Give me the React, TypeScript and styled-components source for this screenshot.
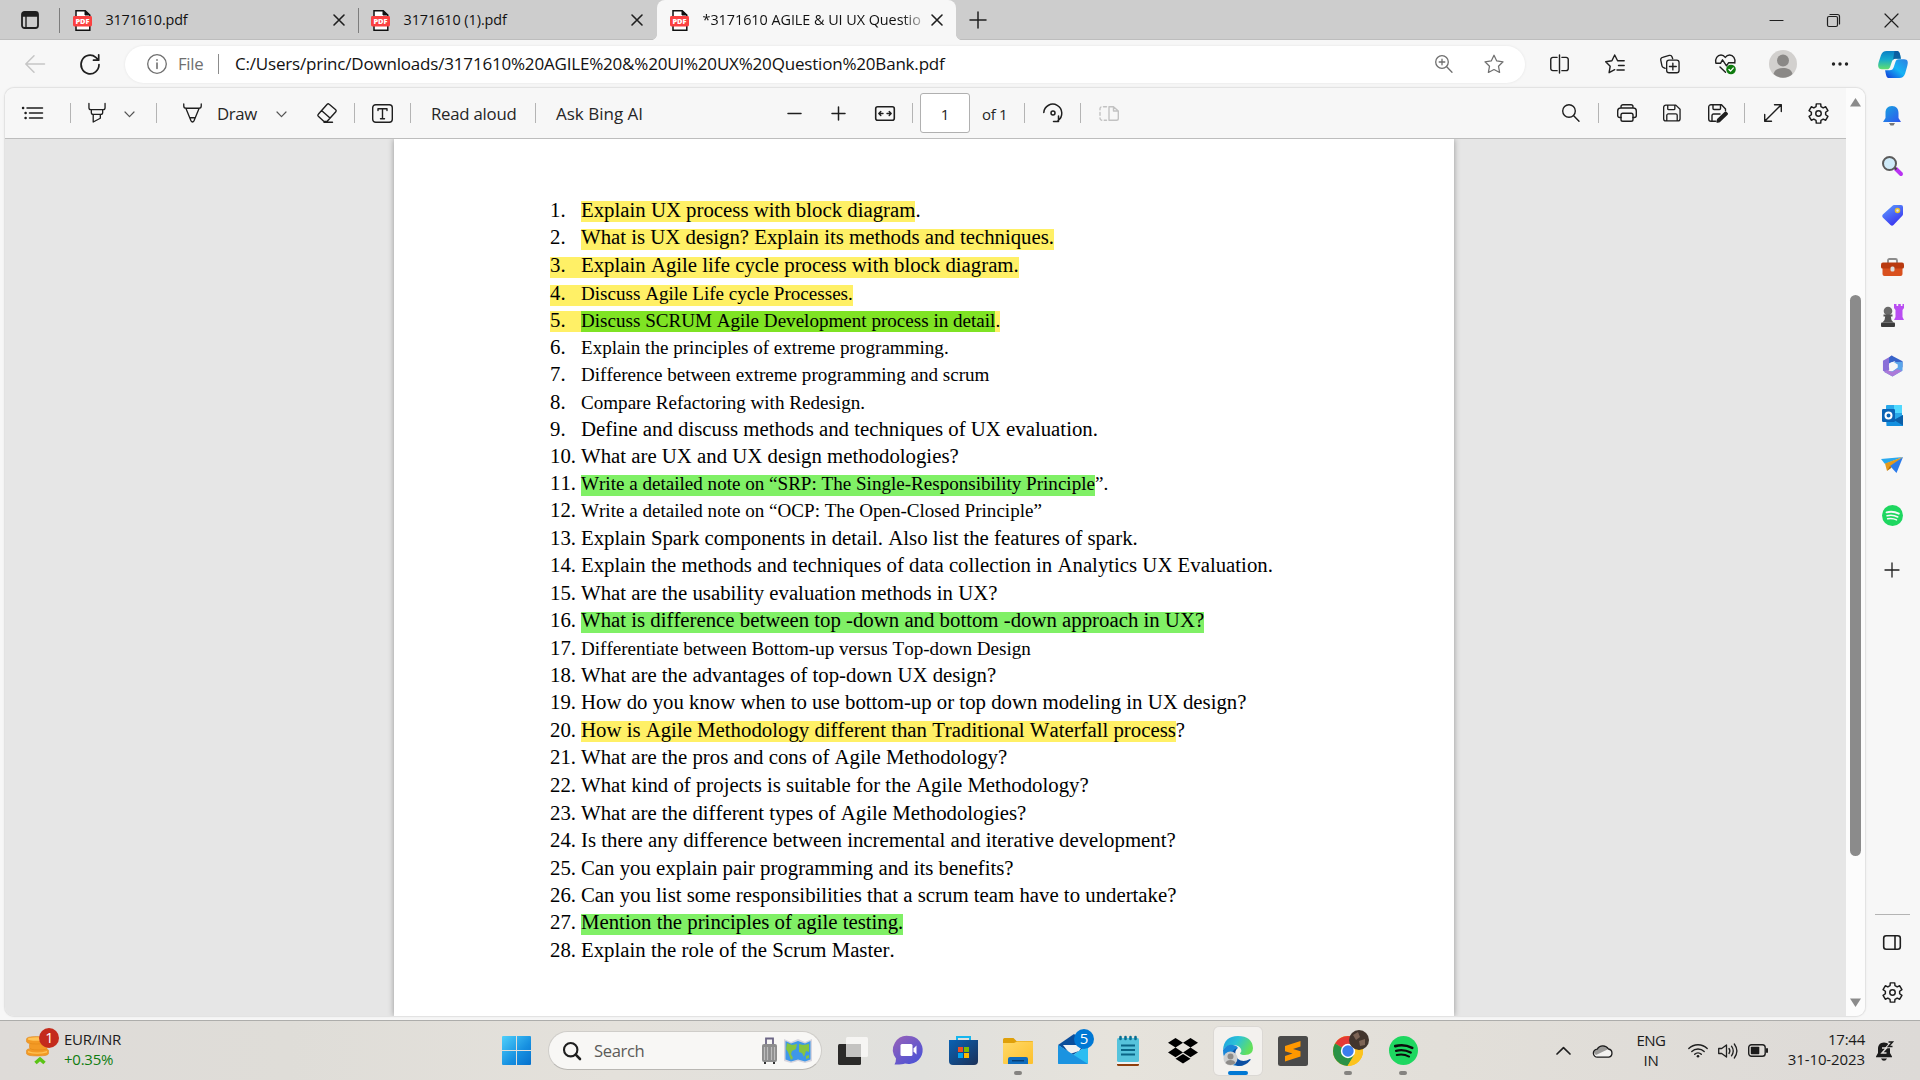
import React from "react";
import styled, { createGlobalStyle, css } from "styled-components";

const Global = createGlobalStyle`
  * { box-sizing: border-box; }
  html, body { margin: 0; padding: 0; }
  body { width: 1920px; height: 1080px; overflow: hidden; background: #f7f7f7; font-family: "Open Sans", "Noto Sans", sans-serif; color: #1b1b1b; }
  svg { display: block; flex: none; }
`;

const Screen = styled.div`
  width: 1920px;
  height: 1080px;
  display: flex;
  flex-direction: column;
  background: #f7f7f7;
`;

/* ---------- shared pieces ---------- */

const Glyph = styled.svg<{ $ml?: number; $c?: string; $sw?: number; $mt?: number }>`
  margin-left: ${(p) => p.$ml ?? 0}px;
  margin-top: ${(p) => p.$mt ?? 0}px;
  color: ${(p) => p.$c ?? "#1f1f1f"};
  fill: none;
  stroke: currentColor;
  stroke-width: ${(p) => p.$sw ?? 1.4};
  stroke-linecap: round;
  stroke-linejoin: round;
  overflow: visible;
`;

const Art = styled.svg<{ $ml?: number; $mt?: number }>`
  margin-left: ${(p) => p.$ml ?? 0}px;
  margin-top: ${(p) => p.$mt ?? 0}px;
  overflow: visible;
`;

const Label = styled.span<{ $w: number; $ml?: number; $size: number; $ls?: number; $c?: string }>`
  width: ${(p) => p.$w}px;
  flex: none;
  margin-left: ${(p) => p.$ml ?? 0}px;
  font-size: ${(p) => p.$size}px;
  letter-spacing: ${(p) => p.$ls ?? 0}px;
  color: ${(p) => p.$c ?? "#262626"};
  line-height: 20px;
  white-space: nowrap;
`;

const Rule = styled.i<{ $ml?: number; $mr?: number; $h?: number; $c?: string }>`
  flex: none;
  width: 1px;
  height: ${(p) => p.$h ?? 20}px;
  margin-left: ${(p) => p.$ml ?? 0}px;
  margin-right: ${(p) => p.$mr ?? 0}px;
  background: ${(p) => p.$c ?? "#b4b4b4"};
`;

const gearPath = (() => {
  const pts: string[] = [];
  for (let i = 0; i < 6; i++) {
    const base = i * 60 - 90;
    [
      [-20, 6.9],
      [-13, 9.4],
      [13, 9.4],
      [20, 6.9],
    ].forEach(([d, r]) => {
      const a = ((base + d) * Math.PI) / 180;
      pts.push(`${(10 + r * Math.cos(a)).toFixed(2)} ${(10 + r * Math.sin(a)).toFixed(2)}`);
    });
  }
  return `M${pts.join("L")}Z`;
})();

const Gear = ({ ml = 0 }: { ml?: number }) => (
  <Glyph $ml={ml} width="21" height="21" viewBox="0 0 20 20">
    <path d={gearPath} />
    <circle cx="10" cy="10" r="2.6" />
  </Glyph>
);

/* ---------- tab strip ---------- */

const TabStrip = styled.header`
  height: 40px;
  flex: none;
  display: flex;
  align-items: center;
  background: #cdcdcd;
  box-shadow: inset 0 -1px 0 #bdbdbd;
`;

const TabBox = styled.div<{ $active?: boolean }>`
  position: relative;
  width: ${(p) => (p.$active ? 299 : 298)}px;
  height: 40px;
  flex: none;
  display: flex;
  align-items: center;
  padding: 0 14px 0 13px;
  ${(p) =>
    p.$active &&
    css`
      margin-left: 1px;
      background: #f7f7f7;
      border-radius: 8px 8px 0 0;
      &::before,
      &::after {
        content: "";
        position: absolute;
        bottom: 0;
        width: 5px;
        height: 5px;
      }
      &::before {
        left: -5px;
        background: radial-gradient(circle at 0 0, transparent 4.5px, #f7f7f7 5px);
      }
      &::after {
        right: -5px;
        background: radial-gradient(circle at 100% 0, transparent 4.5px, #f7f7f7 5px);
      }
    `}
`;

const TabTitle = styled.span<{ $ls: number; $fade?: boolean }>`
  flex: 1;
  min-width: 0;
  margin: 0 ${(p) => (p.$fade ? 8 : 14)}px 0 13.5px;
  white-space: nowrap;
  font-size: 14.4px;
  letter-spacing: ${(p) => p.$ls}px;
  line-height: 20px;
  color: #111;
  ${(p) => p.$fade && css`mask-image: linear-gradient(90deg, #000 90%, rgba(0, 0, 0, 0.2) 100%);`}
`;

const PdfIcon = () => (
  <Art width="19" height="21" viewBox="0 0 19 21">
    <path d="M4 .8h8.2L16.8 5v15.2H3V.8z" fill="#fff" stroke="#111" strokeWidth="1.5" />
    <path d="M12 .8V5h4.8z" fill="#111" stroke="#111" />
    <rect x="0" y="6" width="19" height="10.5" rx="1.4" fill="#fb4141" />
    <text x="9.5" y="14.1" textAnchor="middle" fontFamily="Open Sans, sans-serif" fontWeight="800" fontSize="7.4" fill="#fff">
      PDF
    </text>
  </Art>
);

const Cross = ({ ml = 0, size = 10, sw = 1.6 }: { ml?: number; size?: number; sw?: number }) => (
  <Glyph $ml={ml} $sw={sw} width={size} height={size} viewBox={`0 0 ${size} ${size}`}>
    <path d={`M0 0L${size} ${size}M${size} 0L0 ${size}`} />
  </Glyph>
);

const Tab = ({ title, ls, active }: { title: string; ls: number; active?: boolean }) => (
  <TabBox $active={active}>
    <PdfIcon />
    <TabTitle $ls={ls} $fade={active}>
      {title}
    </TabTitle>
    <Cross />
  </TabBox>
);

const Tabs = () => (
  <TabStrip>
    <Glyph $ml={21} $sw={1.8} width="18" height="18" viewBox="0 0 18 18">
      <rect x="1" y="1" width="16" height="16" rx="2.5" />
      <path d="M1 3.5h16" strokeWidth="4.5" strokeLinecap="butt" />
      <path d="M5 5v12" strokeWidth="1.4" />
    </Glyph>
    <Rule $ml={20} $h={25} $c="#7d7d7d" />
    <Tab title="3171610.pdf" ls={-0.17} />
    <Rule $h={25} $c="#7d7d7d" $mr={-1} />
    <Tab title="3171610 (1).pdf" ls={-0.06} />
    <Tab title="*3171610 AGILE & UI UX Questio" ls={-0.04} active />
    <Glyph $ml={14} $sw={1.5} width="16" height="16" viewBox="0 0 16 16">
      <path d="M8 0v16M0 8h16" />
    </Glyph>
    <Glyph $ml={784} $sw={1.2} width="13" height="13" viewBox="0 0 13 13">
      <path d="M0 6.5h13" />
    </Glyph>
    <Glyph $ml={44} $sw={1.2} width="13" height="13" viewBox="0 0 13 13">
      <rect x="0.5" y="2.5" width="10" height="10" rx="1.5" />
      <path d="M3 .5h7.5a2 2 0 0 1 2 2V10" />
    </Glyph>
    <Cross ml={45} size={13} sw={1.2} />
  </TabStrip>
);

/* ---------- address row ---------- */

const AddressRow = styled.div`
  height: 48px;
  flex: none;
  display: flex;
  align-items: center;
`;

const AddressPill = styled.div`
  width: 1400px;
  height: 37px;
  margin-left: 25px;
  flex: none;
  display: flex;
  align-items: center;
  background: #fff;
  border-radius: 19px;
  box-shadow: 0 0 3px rgba(0, 0, 0, 0.08);
`;

const Avatar = () => (
  <Art $ml={33} width="28" height="28" viewBox="0 0 28 28">
    <circle cx="14" cy="14" r="14" fill="#d2d0ce" />
    <circle cx="14" cy="10.5" r="6" fill="#8a8886" />
    <path d="M4.5 24c1-4.500 5-6 9.500-6s8.500 1.500 9.500 6a14 14 0 0 1-19 0z" fill="#8a8886" />
  </Art>
);

const Copilot = () => (
  <Art $ml={29} width="30" height="27" viewBox="0 0 31 28">
    <defs>
      <linearGradient id="cpA" x1="0" y1="0" x2="0" y2="1">
        <stop offset="0" stopColor="#0a7fc4" />
        <stop offset=".45" stopColor="#15a9cf" />
        <stop offset="1" stopColor="#63e06c" />
      </linearGradient>
      <linearGradient id="cpB" x1="1" y1="0" x2="0" y2="1">
        <stop offset="0" stopColor="#2f7fe0" />
        <stop offset=".5" stopColor="#16b4f5" />
        <stop offset="1" stopColor="#1238d8" />
      </linearGradient>
    </defs>
    <path d="M9 0h10.500c2.500 0 3 2.500 3.500 4.500l.7 3.500H18c-2 0-3.200 1.500-3.800 3.500l-1.700 5c-.6 1.600-1.700 2.500-3.200 2.500H4C0 19-.5 15.500.7 11.500L3 4.500C4 1.600 6 0 9 0z" fill="url(#cpA)" />
    <path d="M17 0h2.500c2.500 0 3 2.500 3.500 4.500l.7 3.500H18c-1 0-1.800.4-2.400 1z" fill="#0b4f94" opacity=".75" />
    <path d="M22 28H11.500C9 28 8.500 25.500 8 23.500L7.300 20H12c2.500 0 3.700-1.500 4.300-3.500l1.900-5.500c.6-1.800 1.700-2.500 3.200-2.500H27c4 0 4.500 3 3.300 7L28 23.500C27 26.400 25 28 22 28z" fill="url(#cpB)" />
  </Art>
);

const Address = () => (
  <AddressRow>
    <Glyph $ml={25} $c="#c6c6c6" $sw={1.5} width="20" height="18" viewBox="0 0 20 18">
      <path d="M19.500 9H1M9 .8L.8 9 9 17.200" />
    </Glyph>
    <Glyph $ml={35} $sw={1.7} width="20" height="21" viewBox="0 0 20 21">
      <path d="M19 10.500a9 9.300 0 1 1-3.200-7.100L18.500 6M18.700.8V6.200H13.500" />
    </Glyph>
    <AddressPill>
      <Glyph $ml={22} $c="#6f6f6f" $sw={1.3} width="20" height="20" viewBox="0 0 20 20">
        <circle cx="10" cy="10" r="9.300" />
        <path d="M10 9v5.500M10 5.800v.4" strokeWidth="1.600" />
      </Glyph>
      <Label $ml={11} $w={40} $size={16.8} $ls={-0.3} $c="#6f6f6f">
        File
      </Label>
      <Rule $c="#8c8c8c" />
      <Label $ml={16} $w={1200} $size={17} $ls={-0.19} $c="#111">
        C:/Users/princ/Downloads/3171610%20AGILE%20&%20UI%20UX%20Question%20Bank.pdf
      </Label>
      <Glyph $c="#6f6f6f" $sw={1.3} width="18" height="18" viewBox="0 0 18 18">
        <circle cx="7" cy="7" r="6.300" />
        <path d="M11.700 11.700L17 17.300M7 4.200v5.600M4.200 7h5.600" />
      </Glyph>
      <Glyph $ml={31} $c="#6f6f6f" $sw={1.3} width="20" height="20" viewBox="0 0 21 20">
        <path d="M10.500 .8l2.900 6 6.600.9-4.800 4.600 1.200 6.600-5.900-3.100-5.900 3.100 1.200-6.600L1 7.700l6.600-.9z" />
      </Glyph>
    </AddressPill>
    <Glyph $ml={25} width="19" height="20" viewBox="0 0 20 20" $sw={1.5}>
      <path d="M7.500 3H3a2.200 2.200 0 0 0-2.200 2.200v9.600A2.200 2.200 0 0 0 3 17h4.500M12.500 3H17a2.200 2.200 0 0 1 2.200 2.200v9.600A2.200 2.200 0 0 1 17 17h-4.500M10 .5v19" />
    </Glyph>
    <Glyph $ml={36} width="20" height="20" viewBox="0 0 20 20" $sw={1.4}>
      <path d="M12.600 6.800L9.700 1 6.900 6.800.7 7.700l4.500 4.500L4.100 18.700l5.600-3M12.600 6.800h6.600M13.500 11.500h5.700M12 16h7.200" />
    </Glyph>
    <Glyph $ml={35} width="20" height="20" viewBox="0 0 21 20" $sw={1.4}>
      <path d="M5.500 14.500L3.300 13.600a2.500 2.500 0 0 1-1.300-1.800L.8 6a2.500 2.500 0 0 1 1.900-3l7-2a2.500 2.500 0 0 1 3 1.600l.6 1.900" />
      <rect x="7" y="6" width="13" height="13.200" rx="2.500" />
      <path d="M13.500 9v7.200M9.900 12.600h7.200" />
    </Glyph>
    <Glyph $ml={35} width="21" height="20" viewBox="0 0 21 20" $sw={1.4}>
      <path d="M.8 9C-.2 4.500 2.500 1 6 1c2 0 3.300 1 4.300 2.400C11.300 2 12.600 1 14.600 1 18.100 1 20.800 4.500 19.800 9M1.200 9.300h4.300l2-3.500 4 6 2-3h6.100M5 13l5.500 5.200" />
      <circle cx="16" cy="15.500" r="4.800" fill="#0f7b0f" stroke="none" />
      <path d="M14 15.600l1.500 1.500 2.700-3" stroke="#fff" />
    </Glyph>
    <Avatar />
    <Glyph $ml={34} width="18" height="4" viewBox="0 0 18 4">
      <g fill="#222" stroke="none">
        <circle cx="2.500" cy="2" r="1.700" />
        <circle cx="9" cy="2" r="1.700" />
        <circle cx="15.500" cy="2" r="1.700" />
      </g>
    </Glyph>
    <Copilot />
  </AddressRow>
);

/* ---------- PDF viewer ---------- */

const Body = styled.div`
  display: flex;
  height: 928px;
  flex: none;
`;

const Viewer = styled.main`
  width: 1860px;
  height: 928px;
  margin-left: 5px;
  flex: none;
  display: flex;
  border-radius: 9px;
  overflow: hidden;
  box-shadow: 0 0 0 1px #e3e3e3, 0 0 3px rgba(0, 0, 0, 0.12);
`;

const ViewerMain = styled.div`
  width: 1841px;
  display: flex;
  flex-direction: column;
`;

const PdfBar = styled.div`
  position: relative;
  z-index: 1;
  height: 51px;
  flex: none;
  display: flex;
  align-items: center;
  background: #f7f7f7;
  border-bottom: 1px solid #bdbdbd;

  ${Label} {
    margin-top: 2px;
  }
`;

const PageInput = styled.div`
  width: 50px;
  height: 40px;
  margin-left: 7px;
  padding-top: 1px;
  flex: none;
  display: flex;
  align-items: center;
  justify-content: center;
  background: #fff;
  border: 1px solid #b0b0b0;
  border-radius: 3px;
  font-size: 15px;
`;

const Chevron = ({ ml }: { ml: number }) => (
  <Glyph $ml={ml} $mt={3} $c="#555" $sw={1.2} width="9" height="5" viewBox="0 0 9 5">
    <path d="M0 0l4.500 4.700L9 0" />
  </Glyph>
);

const Toolbar = () => (
  <PdfBar>
    <Glyph $ml={17} $sw={1.5} width="21" height="14" viewBox="0 0 21 14">
      <path d="M5 2h15.500M7.500 7h13M7.500 12h13" />
      <path d="M1 2h.2M3.500 7h.2M3.500 12h.2" strokeWidth="2.400" />
    </Glyph>
    <Rule $ml={27} />
    <Glyph $ml={17} width="18" height="20" viewBox="0 0 19 20">
      <path d="M1 0v4.500a2 2 0 0 0 2 2h13a2 2 0 0 0 2-2V0M3.500 6.500v3a2 2 0 0 0 2 2h8a2 2 0 0 0 2-2v-3M5.500 11.500v8L13 15.500v-4" />
    </Glyph>
    <Chevron ml={19} />
    <Rule $ml={22} />
    <Glyph $ml={26} width="19" height="20" viewBox="0 0 20 20">
      <path d="M.8.500v2A2.500 2.500 0 0 0 3.300 5h13.400a2.500 2.500 0 0 0 2.500-2.500v-2M3 5l5.300 13q1.700 3 3.400 0L17 5M8 15h4" />
    </Glyph>
    <Label $ml={15} $w={50} $size={16.8} $ls={-0.4}>
      Draw
    </Label>
    <Chevron ml={10} />
    <Glyph $ml={31} width="20" height="20" viewBox="0 0 20 20">
      <path d="M12.200 1.200l6.500 5.500q1 1 .1 2L10 18.500H7L1.300 13.300q-1-1 0-2L10.200 1.200q1-.9 2 0zM4.800 7.800l8.200 7.200M7 19.300h8.500" />
    </Glyph>
    <Rule $ml={17} />
    <Glyph $ml={17} width="21" height="19" viewBox="0 0 21 19">
      <rect x=".7" y=".7" width="19.600" height="17.600" rx="3" />
      <path d="M6 6.500V4.700h9v1.800M10.500 4.700v10M8.500 14.700h4" />
    </Glyph>
    <Rule $ml={17} />
    <Label $ml={20} $w={95} $size={16.8} $ls={-0.25}>
      Read aloud
    </Label>
    <Rule $ml={9} />
    <Label $ml={20} $w={100} $size={17} $ls={0}>
      Ask Bing AI
    </Label>
    <Glyph $ml={132} $sw={1.5} width="13" height="13" viewBox="0 0 13 13">
      <path d="M0 6.500h13" />
    </Glyph>
    <Glyph $ml={31} $sw={1.5} width="13" height="13" viewBox="0 0 13 13">
      <path d="M0 6.500h13M6.500 0v13" />
    </Glyph>
    <Glyph $ml={30} $sw={1.6} width="20" height="15" viewBox="0 0 20 15">
      <rect x=".7" y=".7" width="18.600" height="13.600" rx="2" />
      <path d="M8 7.500H4M5.800 5.500l-2 2 2 2M12 7.500h4M14.200 5.500l2 2-2 2" strokeWidth="1.400" />
    </Glyph>
    <Rule $ml={17} />
    <PageInput>1</PageInput>
    <Label $ml={12} $w={30} $size={15} $ls={-0.3}>
      of 1
    </Label>
    <Rule $ml={12} />
    <Glyph $ml={18} width="20" height="20" viewBox="0 0 20 20" $sw={1.5}>
      <path d="M.8 9.500A9 9 0 1 1 15 17.500M15.500 13v5.500H10.500" />
      <circle cx="10" cy="10" r="2" />
    </Glyph>
    <Rule $ml={17} />
    <Glyph $ml={18} $c="#c2c2c2" width="20" height="15" viewBox="0 0 20 15">
      <path d="M10 .7h4.500L19.300 5v7.500a1.800 1.800 0 0 1-1.800 1.800H10zM14.500 .7V5h4.800" />
      <path d="M7.500 .7H3A2 2 0 0 0 1 2.700v9.600a2 2 0 0 0 2 2h4.500" strokeDasharray="3 2.500" />
    </Glyph>
    <Glyph $ml={443} width="18" height="18" viewBox="0 0 18 18">
      <circle cx="7" cy="7" r="6.300" />
      <path d="M11.700 11.700L17 17.300" />
    </Glyph>
    <Rule $ml={18} />
    <Glyph $ml={18} width="20" height="18" viewBox="0 0 20 18">
      <path d="M4 13.500H2.700a2 2 0 0 1-2-2V7a3 3 0 0 1 3-3h12.600a3 3 0 0 1 3 3v4.500a2 2 0 0 1-2 2H16M4 4V2.700a2 2 0 0 1 2-2h8a2 2 0 0 1 2 2V4" />
      <rect x="4" y="9.300" width="12" height="8" rx="1.800" />
    </Glyph>
    <Glyph $ml={26} width="18" height="18" viewBox="0 0 19 18">
      <path d="M3 .7h10.500L18 5v10a2.300 2.300 0 0 1-2.300 2.300H3A2.300 2.300 0 0 1 .7 15V3A2.300 2.300 0 0 1 3 .7zM5 .9V4.500a1 1 0 0 0 1 1h5.500a1 1 0 0 0 1-1V.9M4 17v-5.500a1.500 1.500 0 0 1 1.500-1.500h8A1.500 1.500 0 0 1 15 11.500V17" />
    </Glyph>
    <Glyph $ml={27} width="20" height="18" viewBox="0 0 20 18">
      <path d="M7.500 17.300H3A2.300 2.300 0 0 1 .7 15V3A2.300 2.300 0 0 1 3 .7h10.500L17.500 5v1.500M5 .9V4.500a1 1 0 0 0 1 1h5.500a1 1 0 0 0 1-1V.9M4 17v-5.500a1.500 1.500 0 0 1 1.500-1.500H12" />
      <path d="M17.600 8.600l1.200 1.200-7.300 7.200-2 .6.700-2z" strokeWidth="2.400" fill="currentColor" />
    </Glyph>
    <Rule $ml={16} />
    <Glyph $ml={19} width="18" height="18" viewBox="0 0 18 18">
      <path d="M.7 17.300L17.300.7M10.500.7h6.800v6.800M.7 10.500v6.800h6.800" />
    </Glyph>
    <Gear ml={26} />
  </PdfBar>
);

const Canvas = styled.div`
  flex: 1;
  padding-left: 389px;
  background: #e6e6e6;
`;

const Sheet = styled.article`
  width: 1060px;
  height: 877px;
  padding: 59px 0 0 156px;
  background: #fff;
  box-shadow: 0 0 6px rgba(0, 0, 0, 0.35);
  font-family: "Liberation Serif", "Times New Roman", serif;
  font-kerning: none;
  font-variant-ligatures: none;
  color: #000;
`;

const Row = styled.div<{ $h: number }>`
  height: ${(p) => p.$h}px;
  display: flex;
  align-items: flex-start;
  white-space: pre;
`;

const highlightBox = css<{ $lift?: boolean; $small?: boolean; $mark?: string }>`
  height: 21px;
  margin-top: ${(p) => (p.$lift ? 3 : 4)}px;
  line-height: ${(p) => (p.$lift ? 17 : 15) + (p.$small ? 3 : 0)}px;
  font-size: ${(p) => (p.$small ? 19.08 : 20.8)}px;
  background: ${(p) => p.$mark ?? "none"};
`;

const Num = styled.span<{ $mark?: string; $lift?: boolean }>`
  width: 31px;
  flex: none;
  ${highlightBox}
`;

const Sentence = styled.span<{ $small?: boolean; $mark?: string; $lift?: boolean }>`
  ${highlightBox}
`;

const Y = "#fff066";
const G = "#80f066";
const GY = "#7fe324";

type Question = {
  t: string;
  base: number;
  small?: boolean;
  lift?: boolean;
  mark?: string;
  tail?: string;
  tailMark?: string;
  numMark?: string;
};

const questions: Question[] = [
  { t: "Explain UX process with block diagram", tail: ".", base: 217, mark: Y, lift: true },
  { t: "What is UX design? Explain its methods and techniques.", base: 244, mark: Y },
  { t: "Explain Agile life cycle process with block diagram.", base: 272, mark: Y, numMark: Y },
  { t: "Discuss Agile Life cycle Processes.", base: 300, small: true, mark: Y, numMark: Y },
  { t: "Discuss SCRUM Agile Development process in detail", tail: ".", base: 327, small: true, mark: GY, tailMark: Y, numMark: Y, lift: true },
  { t: "Explain the principles of extreme programming.", base: 354, small: true },
  { t: "Difference between extreme programming and scrum", base: 381, small: true },
  { t: "Compare Refactoring with Redesign.", base: 409, small: true },
  { t: "Define and discuss methods and techniques of UX evaluation.", base: 436 },
  { t: "What are UX and UX design methodologies?", base: 463 },
  { t: "Write a detailed note on “SRP: The Single-Responsibility Principle", tail: "”.", base: 490, small: true, mark: G },
  { t: "Write a detailed note on “OCP: The Open-Closed Principle”", base: 517, small: true },
  { t: "Explain Spark components in detail. Also list the features of spark.", base: 545 },
  { t: "Explain the methods and techniques of data collection in Analytics UX Evaluation.", base: 572 },
  { t: "What are the usability evaluation methods in UX?", base: 600 },
  { t: "What is difference between top -down and bottom -down approach in UX?", base: 627, mark: G },
  { t: "Differentiate between Bottom-up versus Top-down Design", base: 655, small: true },
  { t: "What are the advantages of top-down UX design?", base: 682 },
  { t: "How do you know when to use bottom-up or top down modeling in UX design?", base: 709 },
  { t: "How is Agile Methodology different than Traditional Waterfall process", tail: "?", base: 737, mark: Y, lift: true },
  { t: "What are the pros and cons of Agile Methodology?", base: 764 },
  { t: "What kind of projects is suitable for the Agile Methodology?", base: 792 },
  { t: "What are the different types of Agile Methodologies?", base: 820 },
  { t: "Is there any difference between incremental and iterative development?", base: 847 },
  { t: "Can you explain pair programming and its benefits?", base: 875 },
  { t: "Can you list some responsibilities that a scrum team have to undertake?", base: 902 },
  { t: "Mention the principles of agile testing.", base: 929, mark: G },
  { t: "Explain the role of the Scrum Master.", base: 957 },
];

const Document = () => (
  <Sheet>
    {questions.map((q, i) => (
      <Row key={q.t} $h={(questions[i + 1]?.base ?? q.base + 27) - q.base}>
        <Num $mark={q.numMark} $lift={q.lift}>
          {i + 1}.
        </Num>
        <Sentence $small={q.small} $mark={q.mark} $lift={q.lift}>
          {q.t}
        </Sentence>
        {q.tail && (
          <Sentence $small={q.small} $mark={q.tailMark} $lift={q.lift}>
            {q.tail}
          </Sentence>
        )}
      </Row>
    ))}
  </Sheet>
);

const ScrollTrack = styled.div`
  width: 19px;
  display: flex;
  flex-direction: column;
  align-items: center;
  justify-content: space-between;
  padding: 10px 0 9px;
  background: #fcfcfc;
`;

const ScrollThumb = styled.div`
  width: 11px;
  height: 561px;
  margin: 187px 0 141px;
  border-radius: 6px;
  background: #8b8b8b;
`;

const Scrollbar = () => (
  <ScrollTrack>
    <Art width="11" height="9" viewBox="0 0 11 9">
      <path d="M5.500 0L11 8.500H0z" fill="#8b8b8b" />
    </Art>
    <ScrollThumb />
    <Art width="11" height="9" viewBox="0 0 11 9">
      <path d="M5.500 9L11 .5H0z" fill="#8b8b8b" />
    </Art>
  </ScrollTrack>
);

/* ---------- Edge sidebar ---------- */

const Side = styled.aside`
  width: 54px;
  display: flex;
  flex-direction: column;
  align-items: center;
`;

const SideSlot = styled.div<{ $h?: number }>`
  width: 54px;
  height: ${(p) => p.$h ?? 50}px;
  flex: none;
  display: flex;
  align-items: center;
  justify-content: center;
`;

const SideRule = styled.div`
  width: 35px;
  height: 1px;
  margin-top: 316px;
  background: #b4b4b4;
`;

const SpotifyMark = ({ size, ink }: { size: number; ink: string }) => (
  <Art width={size} height={size} viewBox="0 0 30 30">
    <circle cx="15" cy="15" r="15" fill="#1ed760" />
    <g fill="none" stroke={ink} strokeLinecap="round">
      <path d="M6.500 10.500q9-2.500 17.500 1.800" strokeWidth="2.800" />
      <path d="M7.300 15.300q8-2 15.200 1.800" strokeWidth="2.400" />
      <path d="M8 19.700q7-1.500 12.800 1.600" strokeWidth="2" />
    </g>
  </Art>
);

const Sidebar = () => (
  <Side>
    <SideSlot $h={56}>
      <Art width="20" height="21" viewBox="0 0 20 21">
        <defs>
          <linearGradient id="bell" x1="0" y1="0" x2="1" y2="1">
            <stop offset="0" stopColor="#18a6e0" />
            <stop offset="1" stopColor="#2f55ee" />
          </linearGradient>
        </defs>
        <path d="M7 17h6l-1.500 2.500h-3z" fill="#777" />
        <path d="M10 0c4.500 0 6.500 3.200 6.500 7v5l2.500 4H1l2.500-4V7c0-3.800 2-7 6.500-7z" fill="url(#bell)" />
      </Art>
    </SideSlot>
    <SideSlot $h={43}>
      <Art width="21" height="20" viewBox="0 0 21 20">
        <path d="M14 13l5 5" stroke="#b933f2" strokeWidth="4" strokeLinecap="round" />
        <path d="M12 11l2.500 2.500" stroke="#444" strokeWidth="2" />
        <circle cx="7.500" cy="7.500" r="6.500" fill="#cfeaf8" stroke="#5b5b5b" strokeWidth="2" />
      </Art>
    </SideSlot>
    <SideSlot $h={57}>
      <Art width="21" height="21" viewBox="0 0 21 21">
        <defs>
          <linearGradient id="tag" x1="0" y1="0" x2=".6" y2="1">
            <stop offset="0" stopColor="#5fa4ff" />
            <stop offset="1" stopColor="#3a33f0" />
          </linearGradient>
        </defs>
        <path d="M12 0h7q2 0 2 2v7q0 1-.7 1.700L11.500 20q-1.500 1.500-3 0L.8 12.500q-1.300-1.500 0-3L10.500.7Q11.200 0 12 0z" fill="url(#tag)" />
        <circle cx="15.500" cy="5.500" r="2" fill="#d9e4ff" stroke="#e8c02c" strokeWidth="1.500" />
      </Art>
    </SideSlot>
    <SideSlot $h={45}>
      <Art width="23" height="18" viewBox="0 0 23 18">
        <path d="M7 5V2.500Q7 1 8.500 1h6Q16 1 16 2.500V5" fill="none" stroke="#8c8c8c" strokeWidth="1.800" />
        <path d="M1.500 8h20v8q0 2-2 2h-16q-2 0-2-2z" fill="#d9501e" />
        <path d="M2 4.500h19q2 0 2 2V9q0 1.500-1.500 1.500h-20Q0 10.500 0 9V6.500q0-2 2-2z" fill="#b93a10" />
        <rect x="9.500" y="8.500" width="4" height="5" rx="1.500" fill="#dcdcdc" />
      </Art>
    </SideSlot>
    <SideSlot $h={52}>
      <Art width="23" height="23" viewBox="0 0 23 23">
        <path d="M13 0h2.500v2h1.700V0h2.600v2h1.700V0H23v4l-1.500 2v7l1.500 3H13l1.500-3V6L13 4z" fill="#b94df2" />
        <circle cx="7" cy="7" r="4.300" fill="#6a6a6a" />
        <path d="M2.500 10.500h9v2H9.800q0 4 2.700 6H1.500q2.700-2 2.700-6H2.500z" fill="#525252" />
        <rect x="0" y="18.500" width="14" height="4.500" rx="1" fill="#3c3c3c" />
      </Art>
    </SideSlot>
    <SideSlot $h={49}>
      <Art width="21" height="22" viewBox="0 0 22 22">
        <path d="M10.500 0L1 5.500V16l3 1.500 3.500-2V8.500l6-4z" fill="#8a6fd8" />
        <path d="M10 0l-2.500 2v6L13 6l5 3.500 3.500 3V6z" fill="#3763c9" />
        <path d="M21.500 6.500v9.500L11 22l-9-5 9-.5 5.500-4V9.500L12 7z" fill="#5aa5ea" />
        <path d="M21 16L11 22l-9-5 3-1.500 6 1.500 4.500-2.500z" fill="#ac79d8" />
        <circle cx="11" cy="11" r="3.800" fill="#f7f7f7" />
      </Art>
    </SideSlot>
    <SideSlot $h={50}>
      <Art width="21" height="21" viewBox="0 0 21 21">
        <rect x="4" y="0" width="16" height="15" rx="1" fill="#28a8ea" />
        <rect x="12" y="0" width="8" height="8" fill="#50d9ff" />
        <path d="M4 12l8 3 9-5v10.500q0 .5-.5.5h-16z" fill="#1490df" />
        <path d="M21 10v10.500L12 15z" fill="#0c5fa8" />
        <rect x="0" y="4" width="13" height="13" rx="1.200" fill="#0a63b5" />
        <circle cx="6.500" cy="10.500" r="3" fill="none" stroke="#fff" strokeWidth="2" />
      </Art>
    </SideSlot>
    <SideSlot $h={50}>
      <Art width="22" height="16" viewBox="0 0 22 16">
        <path d="M22 0L0 2l4 5z" fill="#2aa9ee" />
        <path d="M22 0L4 6.500 6 14l3.500-4z" fill="#e59a1c" />
        <path d="M22 0L9 9l6.500 7z" fill="#2b7bea" />
        <path d="M9 9l-3 5 4.500-3.300z" fill="#b5700a" />
      </Art>
    </SideSlot>
    <SideSlot $h={51}>
      <SpotifyMark size={21} ink="#f7f7f7" />
    </SideSlot>
    <SideSlot $h={57}>
      <Glyph $sw={1.3} width="14" height="14" viewBox="0 0 14 14">
        <path d="M7 0v14M0 7h14" />
      </Glyph>
    </SideSlot>
    <SideRule />
    <SideSlot $h={55}>
      <Glyph $sw={1.6} width="18" height="15" viewBox="0 0 18 15">
        <rect x=".7" y=".7" width="16.600" height="13.600" rx="2.500" />
        <path d="M12 .7v13.600" />
      </Glyph>
    </SideSlot>
    <SideSlot $h={45}>
      <Gear />
    </SideSlot>
  </Side>
);

/* ---------- taskbar ---------- */

const Taskbar = styled.footer`
  height: 60px;
  margin-top: 4px;
  flex: none;
  display: flex;
  align-items: center;
  border-top: 1px solid #adadab;
  background: linear-gradient(90deg, #dedbd8 0%, #dfddd8 15%, #e4e1db 32%, #e0e0dd 48%, #e6e3dc 58%, #e2dfd9 75%, #dddad7 100%);
`;

const Stack = styled.div<{ $ml: number; $w: number; $align?: string; $mb?: number }>`
  width: ${(p) => p.$w}px;
  margin-left: ${(p) => p.$ml}px;
  margin-bottom: ${(p) => p.$mb ?? 4}px;
  flex: none;
  display: flex;
  flex-direction: column;
  align-items: ${(p) => p.$align ?? "flex-start"};
`;

const StackLine = styled.span<{ $c?: string; $ls?: number }>`
  font-size: 15px;
  line-height: 20px;
  letter-spacing: ${(p) => p.$ls ?? -0.25}px;
  color: ${(p) => p.$c ?? "#1b1b1b"};
  white-space: nowrap;
`;

const SearchPill = styled.div`
  width: 274px;
  height: 39px;
  margin-left: 17px;
  flex: none;
  display: flex;
  align-items: center;
  border: 1px solid #cfcdc9;
  border-bottom-color: #b9b7b3;
  border-radius: 20px;
  background: #f8f7f5;
`;

const AppSlot = styled.div<{ $active?: boolean }>`
  position: relative;
  width: 48px;
  height: 48px;
  margin-right: 7px;
  flex: none;
  display: flex;
  align-items: center;
  justify-content: center;
  border-radius: 5px;
  ${(p) => p.$active && css`background: #f3f1ee; box-shadow: 0 0 0 1px #dbd8d4;`}
`;

const Running = styled.i<{ $active?: boolean }>`
  position: absolute;
  bottom: 0;
  left: 50%;
  width: ${(p) => (p.$active ? 20 : 8)}px;
  height: 4px;
  transform: translateX(-50%);
  border-radius: 2px;
  background: ${(p) => (p.$active ? "#0078d4" : "#858380")};
`;

const Apps = styled.div`
  display: flex;
  width: 606px;
  flex: none;
  margin-left: 7px;
`;

const Task = () => (
  <Taskbar>
    <Art $ml={25} width="36" height="40" viewBox="0 0 36 40">
      <g fill="#f39a25" stroke="#dd8212" strokeWidth=".5">
        <path d="M1.500 19.500q0-2.500 11-2.500t11 2.500v3q0 2.500-11 2.500t-11-2.500z" />
        <path d="M4.500 13.500q0-2.500 9-2.500t9 2.500v3q0 2.500-9 2.500t-9-2.500z" />
        <path d="M1.500 8q0-2.500 10-2.500T21.500 8v2.500q0 2.500-10 2.500t-10-2.500z" />
      </g>
      <g fill="#ffc457">
        <ellipse cx="11.500" cy="8" rx="9" ry="1.800" />
        <path d="M3 20q9 3 19 0v1.500q-10 2.500-19 0z" />
      </g>
      <path d="M10.500 32l4.500-4 4.500 4" fill="none" stroke="#5ac416" strokeWidth="3.600" strokeLinejoin="round" />
      <circle cx="24" cy="7" r="10" fill="#c42b1c" />
      <text x="24.300" y="12.300" textAnchor="middle" fontFamily="Open Sans, sans-serif" fontSize="14.500" fill="#fff">
        1
      </text>
    </Art>
    <Stack $ml={3} $w={60}>
      <StackLine>EUR/INR</StackLine>
      <StackLine $c="#107c10">+0.35%</StackLine>
    </Stack>
    <Art $ml={378} width="29" height="29" viewBox="0 0 29 29">
      <defs>
        <linearGradient id="win" x1="0" y1="0" x2="1" y2="1">
          <stop offset="0" stopColor="#4fd0fb" />
          <stop offset=".6" stopColor="#168fe0" />
          <stop offset="1" stopColor="#0670cc" />
        </linearGradient>
      </defs>
      <path d="M1 0h13v14H0V1q0-1 1-1zM15 0h13q1 0 1 1v13H15zM0 15h14v14H1q-1 0-1-1zM15 15h14v13q0 1-1 1H15z" fill="url(#win)" />
    </Art>
    <SearchPill>
      <Glyph $ml={14} $sw={2.1} width="18" height="18" viewBox="0 0 18 18">
        <circle cx="7.700" cy="7.700" r="6.700" />
        <path d="M12.700 12.700l4.300 4.300" strokeWidth="2.600" />
      </Glyph>
      <Label $ml={13} $w={155} $size={16.6} $ls={-0.35} $c="#5c5b59">
        Search
      </Label>
      <Art $ml={12} width="17" height="27" viewBox="0 0 17 27">
        <path d="M5 8V1.500h7V8" fill="none" stroke="#6c6685" strokeWidth="1.800" />
        <rect x="1" y="7" width="15" height="18" rx="2" fill="#8d8d8d" />
        <path d="M3.500 10v13M6.500 10v13M10.500 10v13M13.500 10v13" stroke="#bdbdbd" strokeWidth="1.200" />
        <path d="M3 26h2M12 26h2" stroke="#333" strokeWidth="2" />
      </Art>
      <Art $ml={6} width="28" height="26" viewBox="0 0 28 26">
        <path d="M0 1l7 3 7-3 7 3 7-3v22l-7 2-7-2-7 2-7-2z" fill="#d6d4de" />
        <path d="M1.500 3L7 5.500 14 3l7 2.500L26.500 3v18.500L21 23.500l-7-2-7 2-5.500-2z" fill="#3f97e8" />
        <path d="M3 5l5 2 5-1-1 5-4 2-1 3 2 4-2 2-3-8-2-3zM15 6l4 1 6-1v8l-3-1-2 6-2-4-3-1zM22 18l3-1v3l-3 1z" fill="#86c440" />
      </Art>
    </SearchPill>
    <Apps>
      <AppSlot>
        <Art width="30" height="30" viewBox="0 0 30 30">
          <rect x="0" y="8" width="23" height="21" rx="1.500" fill="#2b2a29" />
          <rect x="8" y="1" width="22" height="20" rx="1.500" fill="#f6f5f3" />
          <path d="M8 8h15v13H9q-1 0-1-1z" fill="#c4c3c1" />
        </Art>
      </AppSlot>
      <AppSlot>
        <Art width="29" height="29" viewBox="0 0 29 29">
          <defs>
            <linearGradient id="chat" x1="0" y1="0" x2=".8" y2="1">
              <stop offset="0" stopColor="#9a62b8" />
              <stop offset="1" stopColor="#4a52d6" />
            </linearGradient>
          </defs>
          <path d="M15 0a14 14 0 1 1-4 27.500q-3 1.200-10.500 1 1.500-2.500 1.500-6A14 14 0 0 1 15 0z" fill="url(#chat)" />
          <rect x="6.500" y="8" width="12" height="12" rx="1.500" fill="#fff" />
          <path d="M19.500 12.500l3-3v9l-3-3z" fill="#fff" />
        </Art>
      </AppSlot>
      <AppSlot>
        <Art width="29" height="29" viewBox="0 0 29 29">
          <defs>
            <linearGradient id="store" x1="0" y1="0" x2="1" y2="1">
              <stop offset="0" stopColor="#0a62b4" />
              <stop offset="1" stopColor="#1c3158" />
            </linearGradient>
          </defs>
          <path d="M8 5V1h13v4" fill="none" stroke="#17b6ee" strokeWidth="2" />
          <path d="M0 4h29v21q0 4-4 4H4q-4 0-4-4z" fill="url(#store)" />
          <rect x="9" y="11" width="5" height="5" fill="#f25022" />
          <rect x="15" y="11" width="5" height="5" fill="#7fba00" />
          <rect x="9" y="17" width="5" height="5" fill="#00a4ef" />
          <rect x="15" y="17" width="5" height="5" fill="#ffb900" />
        </Art>
      </AppSlot>
      <AppSlot>
        <Art width="30" height="28" viewBox="0 0 30 28">
          <defs>
            <linearGradient id="folder" x1="0" y1="0" x2="1" y2="1">
              <stop offset="0" stopColor="#ffd968" />
              <stop offset="1" stopColor="#fdc02c" />
            </linearGradient>
          </defs>
          <path d="M1.500 1h9l3 3H29q1 0 1 1v5H0V2.500Q0 1 1.500 1z" fill="#dfa00a" />
          <path d="M0 6h11l3-1.500h16V26q0 1-1 1H1q-1 0-1-1z" fill="url(#folder)" />
          <path d="M5 27v-5q0-2 2-2h16q2 0 2 2v5z" fill="#0f6cbd" />
          <path d="M9 23.700h12" stroke="#063e75" strokeWidth="1.400" />
        </Art>
        <Running />
      </AppSlot>
      <AppSlot>
        <Art $ml={6} $mt={-7} width="36" height="36" viewBox="0 0 36 36">
          <path d="M0 16L16 5l14 11-15 10z" fill="#0a4e9c" />
          <path d="M5 16h20l-4 6-9 3z" fill="#f1f1f1" />
          <path d="M0 16l15 10L30 16v18q0 1-1 1H1q-1 0-1-1z" fill="#2bbdf2" />
          <path d="M0 16l30 19H1q-1 0-1-1z" fill="#1b93e0" />
          <circle cx="26" cy="10" r="10" fill="#0078d4" />
          <text x="26" y="15.300" textAnchor="middle" fontFamily="Open Sans, sans-serif" fontSize="15" fill="#fff">
            5
          </text>
        </Art>
      </AppSlot>
      <AppSlot>
        <Art width="22" height="30" viewBox="0 0 22 30">
          <rect x="0" y="26" width="22" height="4" rx="1.500" fill="#8e3e0c" />
          <rect x="0" y="24" width="22" height="4" fill="#f2f2f2" />
          <rect x="0" y="2" width="22" height="24" rx="1.500" fill="#56c3dc" />
          <path d="M4 9.500h14M4 14h14M4 18.500h14" stroke="#0a6586" strokeWidth="1.800" />
          <path d="M3.500 1v2M8.500 1v2M13.500 1v2M18.500 1v2" stroke="#0b6f92" strokeWidth="2.600" strokeLinecap="round" />
        </Art>
      </AppSlot>
      <AppSlot>
        <Art width="30" height="26" viewBox="0 0 30 26">
          <path d="M7.500 0L15 4.800 7.500 9.600 0 4.800zM22.500 0L30 4.800l-7.500 4.800L15 4.800zM7.500 9.600l7.500 4.800-7.500 4.800L0 14.400zM22.500 9.600l7.500 4.800-7.500 4.800-7.500-4.800zM7.500 20.800L15 16l7.500 4.800L15 25.600z" fill="#000" />
        </Art>
      </AppSlot>
      <AppSlot $active>
        <Art width="30" height="30" viewBox="0 0 30 30">
          <defs>
            <linearGradient id="edA" x1="0" y1="0" x2="1" y2=".4">
              <stop offset="0" stopColor="#1b9de2" />
              <stop offset=".5" stopColor="#2cc3d5" />
              <stop offset="1" stopColor="#63e05c" />
            </linearGradient>
          </defs>
          <path d="M0 14Q1 0 15 0q14 0 15 12 0 7-8 7-5 0-5-2 2-1 1-4-2-4-8-4Q3 9 0 14z" fill="url(#edA)" />
          <path d="M0 14q4-6 10-5 4 .5 5 3-5 3-3 9 2 5 9 8-3 1-6 1Q0 29 0 14z" fill="#1a86d8" />
          <path d="M14 12q-4 6 1 11 5 4 12 0 1 0 .5 1-4.500 6-12.500 6-6-2-7-8-.5-7 6-10z" fill="#0b4fa3" />
          <circle cx="7.500" cy="22.500" r="7" fill="#cfcfcf" />
          <circle cx="7.500" cy="20.500" r="3" fill="#8d8b89" />
          <path d="M2.500 27q1-3 5-3t5 3a7 7 0 0 1-10 0z" fill="#8d8b89" />
        </Art>
        <Running $active />
      </AppSlot>
      <AppSlot>
        <Art width="30" height="30" viewBox="0 0 30 30">
          <rect width="30" height="30" rx="2.500" fill="#4a4a4a" />
          <path d="M22.500 5v5.500L15 13l7.500 2.300v5.200L7 25.500V20l7.500-2.500L7 15.200V10z" fill="#ff9800" />
        </Art>
      </AppSlot>
      <AppSlot>
        <Art $ml={6} $mt={-6} width="36" height="36" viewBox="0 0 36 36">
          <circle cx="15" cy="21" r="15" fill="#fbbc05" />
          <path d="M15 21L2 13.500A15 15 0 0 1 28 13.500z" fill="#e53935" />
          <path d="M15 21L2 13.500A15 15 0 0 0 14.500 36L21.500 25z" fill="#2a9246" />
          <path d="M15 14h13.300q1.700 3 1.700 7a15 15 0 0 1-15.500 15L21 25z" fill="#fcc31e" />
          <circle cx="15" cy="21" r="7.200" fill="#fff" />
          <circle cx="15" cy="21" r="5.700" fill="#3b7ded" />
          <circle cx="26" cy="10" r="10" fill="#42352d" />
          <path d="M20 5l5-3 2 5-4 3zM26 11l6-2v6l-5 1z" fill="#7d6455" />
        </Art>
        <Running />
      </AppSlot>
      <AppSlot>
        <SpotifyMark size={29} ink="#0c0c0c" />
        <Running />
      </AppSlot>
    </Apps>
    <Glyph $ml={122} $sw={1.7} width="13" height="7" viewBox="0 0 13 7">
      <path d="M0 7L6.500.7 13 7" />
    </Glyph>
    <Art $ml={23} width="20" height="14" viewBox="0 0 20 14">
      <path d="M4.500 13.200a4 4 0 0 1-.3-8A6.500 6.500 0 0 1 15.500 5a4.200 4.200 0 0 1 .3 8.200z" fill="#f3f2f0" />
      <path d="M1 9A4 4 0 0 1 4.200 5.200 6.500 6.500 0 0 1 15.500 5L3 11z" fill="#9b9a98" />
      <path d="M4.500 13.200a4 4 0 0 1-.3-8A6.500 6.500 0 0 1 15.500 5a4.200 4.200 0 0 1 .3 8.200z" fill="none" stroke="#1b1b1b" strokeWidth="1.300" />
    </Art>
    <Stack $ml={22} $w={32} $align="center" $mb={2}>
      <StackLine $ls={-0.5}>ENG</StackLine>
      <StackLine>IN</StackLine>
    </Stack>
    <Glyph $ml={21} $sw={1.4} width="20" height="15" viewBox="0 0 20 15">
      <path d="M.8 5.500a13 13 0 0 1 18.400 0M3.800 8.500a8.800 8.800 0 0 1 12.400 0M6.700 11.300a4.700 4.700 0 0 1 6.600 0" />
      <circle cx="10" cy="13.300" r="1.300" fill="#1b1b1b" stroke="none" />
    </Glyph>
    <Glyph $ml={10} $sw={1.3} width="20" height="16" viewBox="0 0 20 16">
      <path d="M.7 5.500v5h3L8.500 14V2L3.700 5.500zM11 5.500q1.800 2.500 0 5M13.500 3.200q3.500 4.800 0 9.600M16.300 1q5.200 7 0 14" />
    </Glyph>
    <Glyph $ml={10} $sw={1.4} width="20" height="13" viewBox="0 0 20 13">
      <rect x=".7" y=".7" width="16.500" height="11.600" rx="2.800" />
      <rect x="2.800" y="2.800" width="8.500" height="7.400" rx=".8" fill="#1b1b1b" stroke="none" />
      <path d="M19 5v3" strokeWidth="2" />
    </Glyph>
    <Stack $ml={17} $w={80} $align="flex-end">
      <StackLine>17:44</StackLine>
      <StackLine $ls={-0.1}>31-10-2023</StackLine>
    </Stack>
    <Art $ml={11} width="18" height="20" viewBox="0 0 18 20">
      <path d="M8 1.500c4 0 6 2.800 6 6V12l2 3.500v.7H0v-.7L2 12V7.500c0-3.200 2-6 6-6zM5 17.500h6q-1 2.200-3 2.200t-3-2.200z" fill="#1b1b1b" />
      <path d="M6 7h4.500L6 12h4.500" fill="none" stroke="#e0ddda" strokeWidth="1.500" />
      <path d="M12.500 1h4l-4 4.500h4" fill="none" stroke="#e0ddda" strokeWidth="3.500" />
      <path d="M12.500 1h4l-4 4.500h4" fill="none" stroke="#1b1b1b" strokeWidth="1.500" />
    </Art>
  </Taskbar>
);

export default function App() {
  return (
    <>
      <Global />
      <Screen>
        <Tabs />
        <Address />
        <Body>
          <Viewer>
            <ViewerMain>
              <Toolbar />
              <Canvas>
                <Document />
              </Canvas>
            </ViewerMain>
            <Scrollbar />
          </Viewer>
          <Sidebar />
        </Body>
        <Task />
      </Screen>
    </>
  );
}
